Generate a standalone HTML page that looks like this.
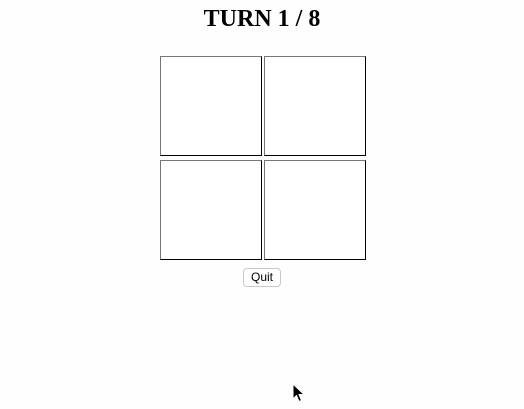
<!DOCTYPE html>
<html><head><style>
body{margin:0;width:524px;height:409px;background:#fefefe;position:relative;overflow:hidden}
h1{position:absolute;left:0;width:524px;top:5px;margin:0;text-align:center;font:bold 24px "Liberation Serif",serif;line-height:28px;color:#000}
.b{position:absolute;width:100px;height:98px;border:1px solid;border-color:#777 #000 #000 #777;background:#fff}
.q{position:absolute;left:243px;top:268px;width:36px;height:17px;border:1px solid #c8c8c8;border-radius:4px;background:#fff;font:12px "Liberation Sans",sans-serif;text-align:center;line-height:17px;color:#000}
</style></head><body>
<h1>TURN 1 / 8</h1>
<div class="b" style="left:160px;top:56px"></div>
<div class="b" style="left:264px;top:56px"></div>
<div class="b" style="left:160px;top:160px"></div>
<div class="b" style="left:264px;top:160px"></div>
<div class="q">Quit</div>
<svg style="position:absolute;left:292px;top:383px" width="14" height="22" viewBox="0 0 14 22"><path d="M1 1 L1 16 L4.5 12.5 L7 18.5 L9.5 17.5 L7 11.5 L12 11.5 Z" fill="#000" stroke="#fff" stroke-width="1"/></svg>
</body></html>
